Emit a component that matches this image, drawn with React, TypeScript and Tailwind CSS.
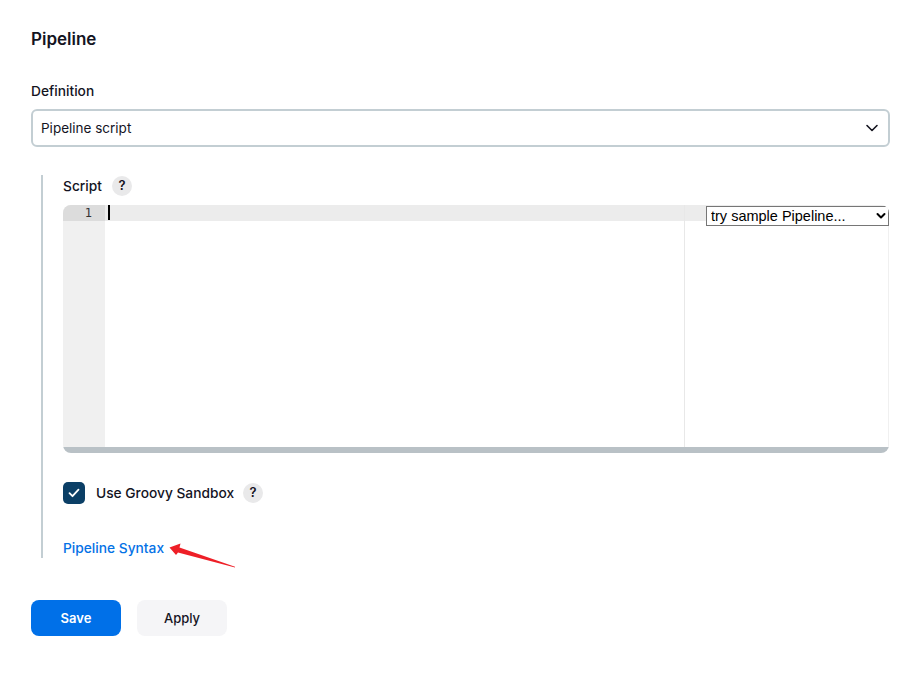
import React from "react";

function Help() {
  return (
    <span className="flex h-5 w-5 items-center justify-center rounded-full bg-[#e9e9ea] text-[13px] font-semibold text-[#14141f]">?</span>
  );
}

export default function App() {
  return (
    <div className="h-[676px] w-[919px] overflow-hidden bg-white pl-[31px] pr-[29px] pt-[29px] font-['Inter',sans-serif] text-[#14141f]">
      <h2 className="h-[20px] text-[17px] font-semibold leading-[20px]">Pipeline</h2>
      <div className="mt-[33px] h-[18px] text-[13.75px] font-medium leading-[18px]">Definition</div>
      <div className="mt-[9px] flex h-[38px] items-center justify-between rounded-md border-2 border-[#c3ced3] pl-2 pr-[9px] text-[13.5px]">
        <span>Pipeline script</span>
        <svg width="14" height="9" viewBox="0 0 14 9" fill="none" stroke="#14141f" strokeWidth="1.6" strokeLinecap="round" strokeLinejoin="round">
          <path d="M2 1.5l5 5 5-5" />
        </svg>
      </div>

      <div className="ml-[10px] mt-[28px] h-[383px] border-l-2 border-[#c3ced3] pl-5 pt-px">
        <div className="flex h-5 items-center gap-[10px] text-[13.75px] font-medium">
          <span>Script</span>
          <Help />
        </div>
        <div className="relative mt-[9px] flex h-[248px] w-[826px] flex-col overflow-hidden rounded-lg bg-white">
          <div className="flex min-h-0 flex-1">
            <div className="w-[42px] shrink-0 bg-[#f0f0f0]">
              <div className="h-4 bg-[#dcdcdc] pr-[13px] text-right font-['DejaVu_Sans_Mono',monospace] text-xs leading-4 text-[#333]">1</div>
            </div>
            <div className="relative min-w-0 flex-1">
              <div className="h-4 bg-[#ececec]"></div>
              <div className="absolute left-[3px] top-0 h-[15px] w-[2px] bg-black"></div>
              <div className="absolute bottom-0 left-[579px] top-0 w-px bg-[#e8e8e8]"></div>
              <div className="absolute bottom-0 right-0 top-0 w-px bg-[#f0f0f0]"></div>
            </div>
          </div>
          <div className="h-[6px] bg-[#b9c1c6]"></div>
          <div className="absolute right-0 top-px h-5 w-[183px]">
            <select className="block h-5 w-full appearance-none border border-[#767676] bg-white pl-1 font-['Liberation_Sans',sans-serif] text-[14.5px] leading-[18px] text-black outline-none">
              <option>try sample Pipeline...</option>
            </select>
            <svg className="pointer-events-none absolute right-[3px] top-[6px]" width="10" height="8" viewBox="0 0 10 8" fill="none" stroke="#000" strokeWidth="2" strokeLinecap="round" strokeLinejoin="round">
              <path d="M1.5 2L5 5.5 8.5 2" />
            </svg>
          </div>
        </div>

        <div className="mt-[29px] flex h-[22px] items-center text-[13.75px] font-medium">
          <span className="flex h-[22px] w-[22px] items-center justify-center rounded-[5px] bg-[#0b3f66]">
            <svg width="12" height="10" viewBox="0 0 12 10" fill="none" stroke="#fff" strokeWidth="1.8" strokeLinecap="round" strokeLinejoin="round">
              <path d="M1.5 5.2l3 3 6-6.5" />
            </svg>
          </span>
          <span className="ml-[11px]">Use Groovy Sandbox</span>
          <span className="ml-[9px]"><Help /></span>
        </div>

        <div className="relative mt-[31px] h-[18px]">
          <a className="text-[13.75px] font-medium leading-[18px] text-[#0472e6]">Pipeline Syntax</a>
          <svg className="absolute left-[105px] top-[8px]" width="70" height="26" viewBox="0 0 70 26" fill="#ee1f27">
            <path d="M1.5 4.5L12.5 0.5L11.5 4.5L67 23.8L67 24.5L10 9.5L8 12Z" />
          </svg>
        </div>
      </div>

      <div className="mt-[42px] flex gap-4 text-[13px] font-semibold">
        <button className="h-9 w-[90px] rounded-lg bg-[#0070e8] pt-px text-white">Save</button>
        <button className="h-9 w-[90px] rounded-lg bg-[#f5f5f7] pt-px font-medium text-[#14141f]">Apply</button>
      </div>
    </div>
  );
}
